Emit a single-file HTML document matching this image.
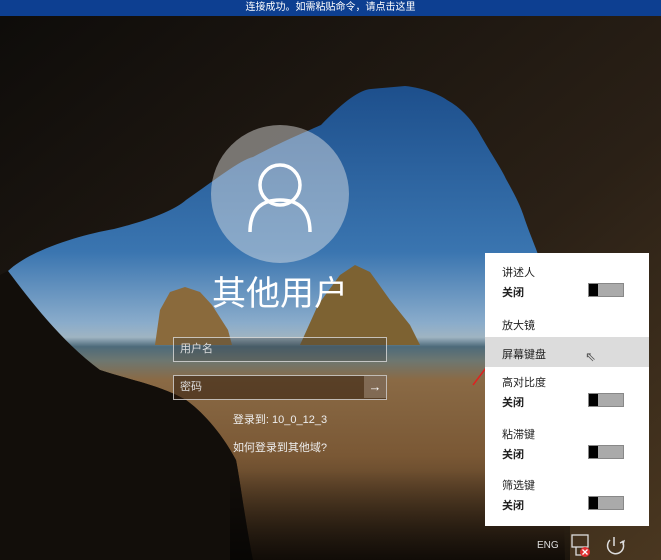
<!DOCTYPE html>
<html><head><meta charset="utf-8"><style>
*{margin:0;padding:0;box-sizing:border-box}
body{width:661px;height:560px;overflow:hidden;position:relative;background:#15110c;font-family:"Liberation Sans","Noto Sans CJK SC",sans-serif}
#top{position:absolute;left:0;top:0;width:661px;height:16px;background:#0d3f91;color:#fff;font-size:10px;text-align:center;line-height:16px}
.abs{position:absolute}
.inp{position:absolute;left:173px;width:214px;height:25px;border:1.5px solid rgba(230,230,230,.75);color:#ddd;font-size:11px;padding-left:6px;line-height:22px}
#panel{position:absolute;left:485px;top:253px;width:164px;height:273px;background:#fff;font-size:11px;color:#222}
#panel .l{position:absolute;left:17px}
#panel b{position:absolute;left:17px;font-weight:bold}
.tg{position:absolute;left:103px;width:36px;height:14px;border:1px solid #888;background:#aaa}
.tg:before{content:"";position:absolute;left:0;top:0;width:9px;height:12px;background:#000}
</style></head><body>
<svg class="abs" style="left:0;top:0" width="661" height="560">
<defs>
<linearGradient id="sky" gradientUnits="userSpaceOnUse" x1="0" y1="86" x2="0" y2="560">
<stop offset="0" stop-color="#1d4f8c"/><stop offset="0.35" stop-color="#3a75b0"/><stop offset="0.5" stop-color="#8aaccb"/><stop offset="0.53" stop-color="#9fb4c2"/><stop offset="0.55" stop-color="#4d6a7a"/><stop offset="0.58" stop-color="#6e7770"/><stop offset="0.62" stop-color="#8a6a45"/><stop offset="0.78" stop-color="#7a5835"/><stop offset="1" stop-color="#2a1e12"/>
</linearGradient>
<linearGradient id="rock" x1="0" y1="0" x2="1" y2="1">
<stop offset="0" stop-color="#0e0c0a"/><stop offset="0.6" stop-color="#2a2016"/><stop offset="1" stop-color="#4a3720"/>
</linearGradient>
<linearGradient id="shade" x1="0" y1="0" x2="0" y2="1">
<stop offset="0" stop-color="#000" stop-opacity="0"/><stop offset="1" stop-color="#000" stop-opacity=".6"/>
</linearGradient>
</defs>
<rect x="0" y="16" width="661" height="544" fill="url(#rock)"/>
<path d="M8 271 C30 250 80 235 114 229 C150 220 175 210 186 200 C215 180 240 160 253 157 C285 140 310 130 321 125 C345 100 360 90 371 89 L405 86 C425 88 440 95 447 100 C465 110 475 125 481 136 C495 160 502 170 506 179 C515 195 520 205 523 214 C530 235 535 245 540 260 L560 330 L565 560 L253 560 C245 520 240 480 236 460 C220 430 200 410 186 400 C160 385 130 380 100 370 C60 350 30 310 8 271 Z" fill="url(#sky)"/>
<path d="M155 345 L160 310 L170 292 L185 287 L200 292 L212 305 L228 330 L232 345 Z" fill="#8a6a3c"/>
<path d="M300 345 L318 305 L340 275 L355 265 L370 272 L390 300 L410 325 L420 345 Z" fill="#7d6232"/>
<path d="M8 271 C30 300 60 340 100 370 C130 380 160 385 186 400 C200 410 220 430 236 460 C240 480 245 520 253 560 L0 560 L0 275 Z" fill="#120e0a"/>
<rect x="230" y="470" width="340" height="90" fill="url(#shade)"/>
<circle cx="280" cy="194" r="69" fill="#e8e8e8" opacity=".45"/>
<circle cx="280" cy="185" r="20" fill="none" stroke="#fff" stroke-width="3.5"/>
<path d="M250 232 C250 208 263 200 280 200 C297 200 310 208 310 232" fill="none" stroke="#fff" stroke-width="3.5"/>
<path d="M473 385 L492 360" stroke="#e02020" stroke-width="1.5"/>
<path d="M492 358 L487 366 L494 365 Z" fill="#e02020"/>
</svg>
<div id="top">连接成功。如需粘贴命令，请点击这里</div>
<div class="abs" style="left:180px;top:272px;width:200px;text-align:center;color:#fff;font-size:34px;line-height:44px">其他用户</div>
<div class="inp" style="top:337px;background:rgba(60,60,60,.3)">用户名</div>
<div class="inp" style="top:375px;background:rgba(50,30,15,.55)">密码<span style="position:absolute;right:0;top:0;width:22px;height:22px;background:rgba(170,150,130,.5);text-align:center;color:#fff;font-size:13px">→</span></div>
<div class="abs" style="left:180px;top:411px;width:200px;text-align:center;color:#eee;font-size:11px">登录到: 10_0_12_3</div>
<div class="abs" style="left:180px;top:439px;width:200px;text-align:center;color:#eee;font-size:11px">如何登录到其他域?</div>
<div id="panel">
<span class="l" style="top:11px">讲述人</span><b style="top:31px">关闭</b><div class="tg" style="top:30px"></div>
<span class="l" style="top:64px">放大镜</span>
<div style="position:absolute;left:0;top:84px;width:164px;height:30px;background:#dcdcdc"></div>
<span class="l" style="top:93px">屏幕键盘</span>
<span class="abs" style="left:100px;top:96px;font-size:13px;color:#555">⇖</span>
<span class="l" style="top:121px">高对比度</span><b style="top:141px">关闭</b><div class="tg" style="top:140px"></div>
<span class="l" style="top:173px">粘滞键</span><b style="top:193px">关闭</b><div class="tg" style="top:192px"></div>
<span class="l" style="top:224px">筛选键</span><b style="top:244px">关闭</b><div class="tg" style="top:243px"></div>
</div>
<div class="abs" style="left:537px;top:540px;color:#ddd;font-size:10px">ENG</div>
<svg class="abs" style="left:570px;top:533px" width="60" height="26">
<rect x="2" y="2" width="16" height="12" fill="none" stroke="#ddd" stroke-width="1.3"/>
<path d="M6 14 V22 H12" stroke="#ddd" fill="none" stroke-width="1.3"/>
<circle cx="15" cy="19" r="5" fill="#e03030"/><path d="M12.5 16.5l5 5M17.5 16.5l-5 5" stroke="#fff" stroke-width="1.3"/>
<path d="M44 4 V13 M40 7 A8 8 0 1 0 52 8" fill="none" stroke="#ddd" stroke-width="1.5"/>
<path d="M50 10 l4 -2 l-1 4" fill="none" stroke="#ddd" stroke-width="1.3"/>
</svg>
</body></html>
